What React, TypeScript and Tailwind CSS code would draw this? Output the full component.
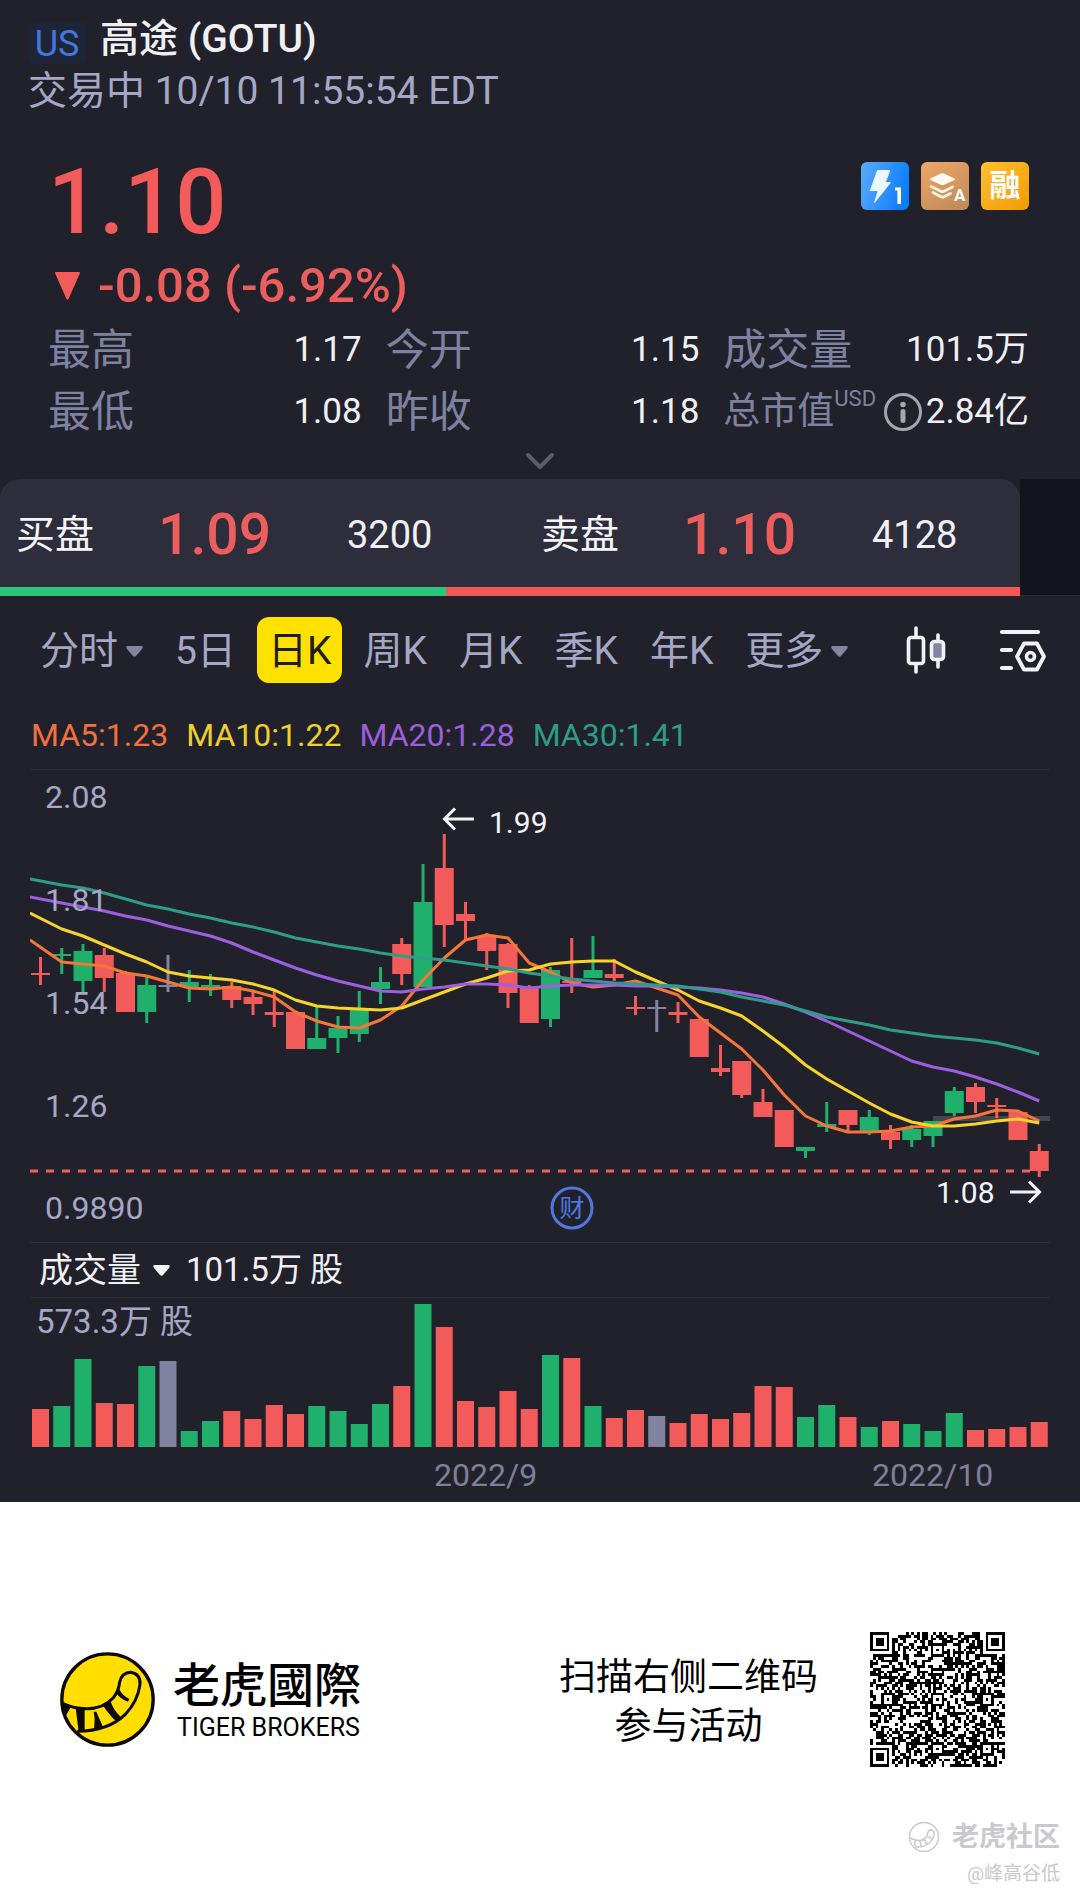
import { ChevronDown } from 'lucide-react';

type Tone = 'up' | 'down' | 'flat';

interface Candle {
  tone: Tone;
  high: number;
  top: number;
  bottom: number;
  low: number;
  volume: number;
}

const TONES = { u: 'up', d: 'down', f: 'flat' } as const;
const FILL: Record<Tone, string> = { up: '#1fb06c', down: '#f25b59', flat: '#8283a0' };

const STEP = 21.25;
const centerOf = (i: number) => 10.5 + i * STEP;

// tone, high, body top, body bottom, low, volume
const RAW: ['u' | 'd' | 'f', number, number, number, number, number][] = [
  ['d', 187, 203, 205, 215, 38],
  ['u', 178, 184, 186, 204, 41],
  ['u', 174, 181, 211, 222, 88],
  ['d', 178, 185, 208, 222, 44],
  ['d', 201, 203, 242, 242, 43],
  ['u', 207, 215, 242, 253, 81],
  ['f', 185, 215, 217, 222, 86],
  ['u', 200, 212, 217, 232, 16],
  ['u', 204, 215, 219, 226, 26],
  ['d', 212, 216, 230, 238, 36],
  ['d', 222, 227, 234, 245, 28],
  ['d', 221, 242, 245, 257, 42],
  ['d', 242, 242, 279, 279, 33],
  ['u', 237, 268, 279, 279, 41],
  ['u', 246, 258, 268, 283, 36],
  ['u', 221, 239, 264, 272, 23],
  ['u', 197, 212, 219, 234, 43],
  ['d', 168, 174, 204, 215, 61],
  ['u', 94, 132, 217, 217, 143],
  ['d', 64, 98, 155, 177, 120],
  ['d', 132, 144, 151, 170, 46],
  ['d', 163, 166, 181, 200, 40],
  ['d', 173, 174, 223, 238, 56],
  ['d', 215, 217, 253, 253, 38],
  ['u', 197, 200, 249, 257, 92],
  ['d', 168, 211, 213, 223, 89],
  ['u', 166, 200, 208, 208, 41],
  ['d', 189, 204, 208, 211, 29],
  ['d', 226, 237, 239, 245, 37],
  ['f', 230, 237, 239, 262, 31],
  ['d', 232, 242, 245, 253, 24],
  ['d', 249, 249, 287, 287, 33],
  ['d', 275, 298, 302, 306, 28],
  ['d', 291, 291, 325, 328, 34],
  ['d', 319, 332, 347, 347, 61],
  ['d', 340, 340, 377, 377, 60],
  ['u', 377, 377, 381, 388, 30],
  ['u', 332, 354, 357, 362, 42],
  ['d', 340, 340, 355, 361, 30],
  ['u', 340, 347, 362, 365, 20],
  ['d', 355, 362, 370, 379, 26],
  ['u', 355, 359, 370, 377, 23],
  ['u', 351, 351, 366, 377, 16],
  ['u', 317, 321, 343, 346, 34],
  ['d', 313, 317, 332, 343, 17],
  ['d', 328, 335, 337, 348, 18],
  ['d', 342, 342, 370, 370, 20],
  ['d', 374, 381, 401, 407, 25],
];

const CANDLES: Candle[] = RAW.map(([t, high, top, bottom, low, volume]) => ({
  tone: TONES[t],
  high,
  top,
  bottom,
  low,
  volume,
}));

const AVERAGES = [
  {
    name: 'MA5',
    color: '#f5763a',
    points: [170, 192, 194, 196, 203, 206, 212, 218, 219, 217, 221, 227, 242, 251, 257, 258, 250, 236, 210, 188, 170, 165, 168, 193, 202, 213, 217, 215, 211, 218, 225, 247, 263, 279, 300, 325, 346, 356, 362, 362, 361, 357, 356, 349, 346, 340, 341, 351],
  },
  {
    name: 'MA10',
    color: '#f6d42c',
    points: [143, 159, 166, 175, 184, 192, 202, 206, 208, 210, 214, 220, 230, 236, 238, 239, 240, 238, 230, 222, 214, 208, 201, 200, 194, 192, 191, 191, 202, 211, 220, 231, 238, 246, 261, 277, 295, 309, 321, 333, 344, 352, 356, 356, 354, 351, 349, 353],
  },
  {
    name: 'MA20',
    color: '#9c5fe0',
    points: [127, 133, 137, 141, 146, 150, 156, 161, 166, 173, 182, 190, 198, 205, 211, 216, 221, 222, 219, 217, 214, 214, 215, 218, 216, 215, 215, 215, 216, 216, 217, 218, 220, 223, 227, 234, 242, 251, 261, 271, 281, 291, 297, 301, 307, 314, 322, 331],
  },
  {
    name: 'MA30',
    color: '#2f9c8a',
    points: [109, 115, 118, 123, 129, 135, 139, 144, 148, 153, 157, 162, 168, 172, 176, 179, 183, 186, 188, 190, 193, 196, 199, 203, 206, 209, 211, 213, 214, 215, 216, 219, 222, 227, 231, 235, 241, 247, 251, 255, 260, 263, 266, 268, 270, 273, 278, 284],
  },
];

const linePoints = (ys: number[]) => ys.map((y, i) => `${i === 0 ? 0 : centerOf(i)},${y}`).join(' ');

const AXIS = [
  { label: '2.08', y: 27 },
  { label: '1.81', y: 130 },
  { label: '1.54', y: 233 },
  { label: '1.26', y: 336 },
  { label: '0.9890', y: 438 },
];

function Caret({ className }: { className: string }) {
  return (
    <svg viewBox="0 0 17 11" className={`w-[17px] h-[11px] ${className}`} fill="currentColor" aria-hidden="true">
      <path d="M2 0h13q3 0 1 3l-6 7q-1.500 1.600-3 0L1 3q-2-3 1-3z" />
    </svg>
  );
}

function Header() {
  return (
    <header className="pl-7 pr-6 pt-[14px]">
      <div className="flex items-end gap-[14px]">
        <span className="w-[58px] h-[42px] rounded-md bg-[#1e2539] text-[#4478dc] text-[36px] leading-[44px] text-center">US</span>
        <h1 className="text-[39px] leading-[50px] font-medium text-[#f0f0f4]">高途 (GOTU)</h1>
      </div>
      <p className="text-[39px] leading-[54px] text-[#a5a7c5]">交易中 10/10 11:55:54 EDT</p>
    </header>
  );
}

function Badges() {
  return (
    <div className="flex gap-3">
      <svg viewBox="0 0 48 48" className="w-12 h-12 rounded-md" aria-hidden="true">
        <defs>
          <linearGradient id="bolt-bg" x1="0" y1="0.3" x2="1" y2="0.6">
            <stop offset="0" stopColor="#55a8fa" />
            <stop offset="1" stopColor="#0a7bfb" />
          </linearGradient>
        </defs>
        <rect width="48" height="48" fill="url(#bolt-bg)" />
        <path d="M17 8h11.500q1 0 .6 1L25 20h4q1.200 0 .4 1.200L14 40.500q-1 1-.8-.4L16.500 29H10q-1.200 0-.9-1L15.800 9q.3-1 1.200-1z" fill="#eef7ff" />
        <path d="M34 25.500h6V42h-3.600V28.500H34z" fill="#fff" />
      </svg>
      <svg viewBox="0 0 48 48" className="w-12 h-12 rounded-md" aria-hidden="true">
        <defs>
          <linearGradient id="layer-bg" x1="0.2" y1="0" x2="0.8" y2="1">
            <stop offset="0" stopColor="#eba566" />
            <stop offset="1" stopColor="#c08b58" />
          </linearGradient>
        </defs>
        <rect width="48" height="48" fill="url(#layer-bg)" />
        <path d="M9.500 16.500 20 11.500q1.500-.7 3 0l10.500 5q1.500.8 0 1.600L23 22.700q-1.500.7-3 0L9.500 18q-1.500-.8 0-1.500z" fill="#fffaf2" />
        <path d="m10 24.500 10.500 5q1 .5 2 0l9-4.500M12 30.500l8.500 4.500q1 .5 2 0l7-3.500" fill="none" stroke="#fff2e2" strokeWidth="2.800" strokeLinecap="round" />
        <text x="33" y="39" fill="#fff" fontSize="17" fontWeight="700">A</text>
      </svg>
      <span className="w-12 h-12 rounded-md bg-linear-to-br from-[#ffc02b] to-[#f39a00] text-white text-[31px] leading-[48px] font-bold text-center">融</span>
    </div>
  );
}

function Stat({ label, value }: { label: string; value: string }) {
  return (
    <div className="flex items-center justify-between">
      <dt className="text-[43px] text-[#7f81a0]">{label}</dt>
      <dd className="text-[35px] text-[#f0f0f4]">{value}</dd>
    </div>
  );
}

function Quote() {
  return (
    <section className="pl-12 pr-[51px] pt-11">
      <div className="flex items-start justify-between">
        <p className="text-[90px] leading-[82px] font-medium text-[#f25b59]">1.10</p>
        <Badges />
      </div>
      <p className="mt-4 pl-[7px] flex items-center gap-[18px] text-[49px] leading-[52px] font-medium text-[#ec5e5d]">
        <svg viewBox="0 0 25 28" className="w-[25px] h-7" fill="#f25b59" aria-hidden="true">
          <path d="M1 0h23q1.500 0 .8 1.500L13.500 27q-1 1.600-2 0L.2 1.500Q-.5 0 1 0z" />
        </svg>
        -0.08 (-6.92%)
      </p>
      <dl className="mt-[7px] grid grid-cols-[313fr_313fr_305fr] gap-x-6 leading-[62px]">
        <Stat label="最高" value="1.17" />
        <Stat label="今开" value="1.15" />
        <Stat label="成交量" value="101.5万" />
        <Stat label="最低" value="1.08" />
        <Stat label="昨收" value="1.18" />
        <div className="flex items-center justify-between">
          <dt className="flex items-center text-[37px] text-[#7f81a0]">
            总市值
            <span className="self-start text-[22px] leading-[36px]">USD</span>
          </dt>
          <dd className="flex items-center gap-1 text-[35px] text-[#f0f0f4]">
            <svg viewBox="0 0 38 38" className="w-[38px] h-[38px]" aria-hidden="true">
              <circle cx="19" cy="19" r="17.500" fill="none" stroke="#a5a5ae" strokeWidth="3" />
              <circle cx="19" cy="11.500" r="2.800" fill="#a5a5ae" />
              <rect x="16.500" y="16" width="5" height="14" rx="2.500" fill="#a5a5ae" />
            </svg>
            2.84亿
          </dd>
        </div>
      </dl>
    </section>
  );
}

function DepthSide({ label, price, size }: { label: string; price: string; size: string }) {
  return (
    <div className="pt-1 pl-4 grid grid-cols-[142px_189px_auto] items-center leading-[104px]">
      <span className="text-[39px] text-[#f4f4f8]">{label}</span>
      <span className="text-[57px] font-medium text-[#ee5d5c]">{price}</span>
      <span className="text-[38px] text-[#f0f0f4]">{size}</span>
    </div>
  );
}

function Depth() {
  return (
    <section className="flex">
      <div className="flex-1">
        <div className="rounded-t-[20px] bg-[#2d2d3c] grid grid-cols-[525fr_495fr]">
          <DepthSide label="买盘" price="1.09" size="3200" />
          <DepthSide label="卖盘" price="1.10" size="4128" />
        </div>
        <div className="flex h-[9px]">
          <div className="flex-[446] bg-[#29c77c]" />
          <div className="flex-[574] bg-[#f25855]" />
        </div>
      </div>
      <div className="w-15 bg-[#13141d] border-b border-[#2b2c38]" />
    </section>
  );
}

const TABS = [
  { label: '分时', menu: true },
  { label: '5日' },
  { label: '日K', active: true },
  { label: '周K' },
  { label: '月K' },
  { label: '季K' },
  { label: '年K' },
  { label: '更多', menu: true },
];

function Tabs() {
  return (
    <nav className="pt-[21px] pl-10 pr-[33px] flex items-center">
      <div className="flex items-center gap-8 text-[39px] text-[#a5a7c5]">
        {TABS.map((tab) =>
          tab.active ? (
            <button key={tab.label} type="button" className="-mx-[11px] px-[11px] pt-0.5 h-[66px] leading-[64px] rounded-xl bg-[#ffe100] text-[#1f1d10] whitespace-nowrap">
              {tab.label}
            </button>
          ) : (
            <button key={tab.label} type="button" className="pt-0.5 h-[66px] leading-[64px] flex items-center gap-2 whitespace-nowrap">
              {tab.label}
              {tab.menu && <Caret className="text-[#8485a4]" />}
            </button>
          )
        )}
      </div>
      <div className="ml-auto flex items-center gap-[53px]">
        <button type="button" aria-label="K线样式">
          <svg viewBox="0 0 40 48" className="w-10 h-12" fill="none" stroke="#f2f2f5" strokeWidth="3.600" strokeLinecap="round">
            <rect x="2.500" y="11.500" width="15" height="26" rx="2.500" />
            <path d="M10 2v9M10 38v8M32 9v6M32 35v6" />
            <rect x="25.500" y="15.500" width="12" height="18" rx="3" fill="#8485a4" />
          </svg>
        </button>
        <button type="button" aria-label="指标设置">
          <svg viewBox="0 0 48 44" className="w-12 h-11" fill="none" stroke="#f2f2f5" strokeWidth="4.200" strokeLinecap="round" strokeLinejoin="round">
            <path d="M3 4h36M3 22h9M3 40h9" />
            <path d="M25 15.500h13l7 13-7 13H25l-7-13z" strokeWidth="3.800" />
            <circle cx="31.500" cy="28.500" r="4" strokeWidth="3.600" />
          </svg>
        </button>
      </div>
    </nav>
  );
}

function PriceChart() {
  return (
    <svg viewBox="0 0 1020 472" className="block w-full h-auto" role="img" aria-label="日K">
      <rect x="903" y="346" width="117" height="5" fill="#44454e" />
      <path d="M0 401H1000" stroke="#ef605f" strokeWidth="3" strokeDasharray="8 8" />
      {CANDLES.map((c, i) => (
        <g key={i} fill={FILL[c.tone]}>
          <rect x={centerOf(i) - 1.5} y={c.high} width="3" height={c.low - c.high} />
          <rect x={centerOf(i) - 9.5} y={c.top} width="19" height={c.bottom - c.top} />
        </g>
      ))}
      {AVERAGES.map((ma) => (
        <polyline key={ma.name} points={linePoints(ma.points)} fill="none" stroke={ma.color} strokeWidth="3" strokeLinejoin="round" />
      ))}
      <g fill="#a5a7c5" fontSize="32">
        {AXIS.map((a) => (
          <text key={a.label} x="15" y={a.y + 11}>
            {a.label}
          </text>
        ))}
      </g>
      <g stroke="#f4f4f8" strokeWidth="3" fill="none">
        <path d="M444 49H415M425 38.500 414.500 49l10.500 10.500" />
        <path d="M980 422h29M999 411.500l10.500 10.500-10.500 10.500" />
      </g>
      <g fill="#f4f4f8" fontSize="30">
        <text x="459" y="63">1.99</text>
        <text x="906" y="433">1.08</text>
      </g>
      <circle cx="542" cy="438" r="20" fill="none" stroke="#4e78dc" strokeWidth="3" />
      <text x="542" y="447" fill="#4e78dc" fontSize="25" textAnchor="middle">
        财
      </text>
    </svg>
  );
}

function VolumeChart() {
  return (
    <svg viewBox="0 0 1020 149" className="block w-full h-auto" role="img" aria-label="成交量">
      <text x="6" y="35" fill="#a5a7c5" fontSize="33">
        573.3万 股
      </text>
      {CANDLES.map((c, i) => (
        <rect key={i} x={centerOf(i) - 8.5} y={149 - c.volume} width="17" height={c.volume} fill={FILL[c.tone]} />
      ))}
    </svg>
  );
}

function Chart() {
  return (
    <section className="mt-8 mx-[30px]">
      <div className="pl-px flex gap-[18px] text-[32px] leading-10">
        <span className="text-[#f07040]">MA5:1.23</span>
        <span className="text-[#ecd02e]">MA10:1.22</span>
        <span className="text-[#9c5fdc]">MA20:1.28</span>
        <span className="text-[#2f9c8a]">MA30:1.41</span>
      </div>
      <div className="mt-[14px] border-y border-[#2e2f3b]">
        <PriceChart />
      </div>
      <div className="h-[54px] pl-[9px] flex items-center gap-3 text-[#f0f0f4]">
        <button type="button" className="flex items-center gap-3 text-[34px]">
          成交量
          <Caret className="text-[#f4f4f8]" />
        </button>
        <span className="pl-1 text-[33px]">101.5万 股</span>
      </div>
      <div className="border-t border-[#2e2f3b]">
        <VolumeChart />
      </div>
      <div className="h-[55px] grid grid-cols-[404fr_438fr_178fr] text-[32px] leading-[57px] text-[#7f8098]">
        <span />
        <span>2022/9</span>
        <span>2022/10</span>
      </div>
    </section>
  );
}

function TigerLogo() {
  return (
    <svg viewBox="60 68 285 285" className="w-[95px] h-[95px]" aria-hidden="true">
      <circle cx="202.500" cy="210.500" r="137" fill="#ffde00" />
      <path d="M68 222Q100 238 140 238 190 238 220 205 236 186 239 158 246 130 272 129 302 134 300 165 294 215 255 256 205 305 112 306" fill="none" stroke="#0b0a05" strokeWidth="9" />
      <path d="M62 218 92 234 76 262 66 250zM107 236H134L134 308 116 308zM161 247H169L190 295 162 304 164 268zM190 230 212 216Q218 240 243 264L228 275Q212 262 190 230zM228 190 238 180Q246 198 268 209L264 217Q242 210 228 190z" fill="#0b0a05" />
      <path d="M204 242 226 262 222 270z" fill="#0b0a05" />
      <circle cx="202.500" cy="210.500" r="137" fill="none" stroke="#0b0a05" strokeWidth="10" />
    </svg>
  );
}

const QR_SIZE = 49;
const QR_MARKS = [6, 24, 42];

const ring = (dx: number, dy: number) => Math.max(Math.abs(dx), Math.abs(dy));

function qrPath() {
  let seed = 20221010;
  let d = '';
  const last = QR_SIZE - 4;
  for (let y = 0; y < QR_SIZE; y++) {
    for (let x = 0; x < QR_SIZE; x++) {
      seed = (seed * 1103515245 + 12345) % 2147483648;
      let on = seed / 2147483648 > 0.45;
      if (x === 6) on = y % 2 === 0;
      if (y === 6) on = x % 2 === 0;
      for (const mx of QR_MARKS) {
        for (const my of QR_MARKS) {
          const r = ring(x - mx, y - my);
          if (r <= 2) on = r !== 1;
        }
      }
      for (const [fx, fy] of [[3, 3], [last, 3], [3, last]]) {
        const r = ring(x - fx, y - fy);
        if (r <= 4) on = r !== 2 && r !== 4;
      }
      if (on) d += `M${x} ${y}h1v1h-1z`;
    }
  }
  return d;
}

const QR_PATH = qrPath();

function Footer() {
  return (
    <footer className="bg-white text-black">
      <div className="pt-[130px] pl-[60px] pr-[75px] flex items-center">
        <TigerLogo />
        <div className="ml-[18px] pt-1">
          <p className="text-[47px] leading-[52px] font-medium font-['Roboto','Noto_Sans_CJK_TC',sans-serif]">老虎國際</p>
          <p className="pl-1 text-[25px] leading-8">TIGER BROKERS</p>
        </div>
        <p className="ml-auto pt-1 text-[37px] leading-[49px] text-center">
          扫描右侧二维码
          <br />
          参与活动
        </p>
        <svg viewBox="0 0 49 49" className="ml-[52px] w-[135px] h-[135px]" shapeRendering="crispEdges" role="img" aria-label="二维码">
          <path d={QR_PATH} fill="#000" />
        </svg>
      </div>
      <div className="mt-[50px] pr-5 pb-2 flex flex-col items-end text-[#c9c9cf]">
        <p className="flex items-center gap-3 text-[27px] leading-10 font-bold">
          <svg viewBox="0 0 32 32" className="w-8 h-8" fill="none" stroke="#c9c9cf" strokeWidth="1.500" aria-hidden="true">
            <circle cx="16" cy="16" r="14.500" />
            <path d="M2 17q12 6 17-2 1-7 5-6 4 2 1 8-5 10-18 9M7 20v5M12 20l1 5M16 18l3 5M20 15l4 3" />
          </svg>
          老虎社区
        </p>
        <p className="text-[19px] leading-[34px]">@峰高谷低</p>
      </div>
    </footer>
  );
}

export default function App() {
  return (
    <main className="min-h-screen bg-white font-['Roboto','Noto_Sans_CJK_SC',sans-serif]">
      <div className="bg-[#21212b]">
        <Header />
        <Quote />
        <button type="button" aria-label="展开" className="flex w-full h-9 items-center justify-center text-[#5c5c6c]">
          <ChevronDown className="w-12 h-12" strokeWidth={2} />
        </button>
        <Depth />
        <Tabs />
        <Chart />
      </div>
      <Footer />
    </main>
  );
}
